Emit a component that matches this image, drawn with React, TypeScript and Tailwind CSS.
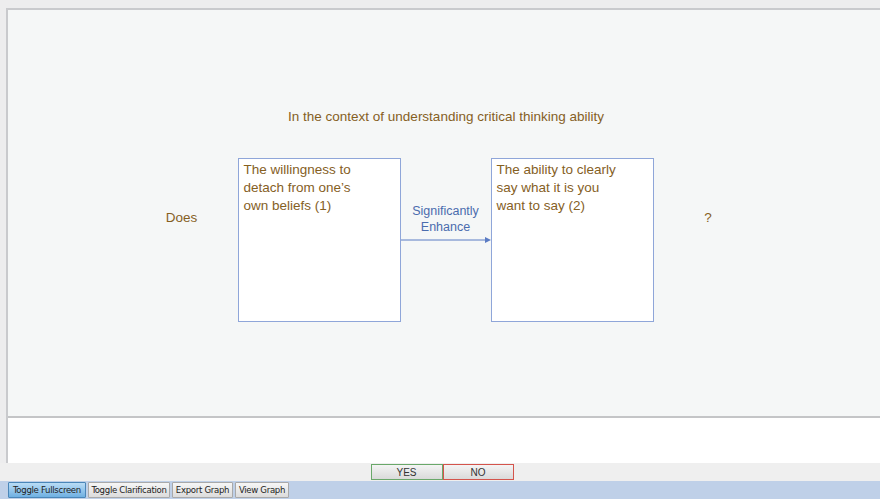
import React from "react";

const brown = "text-[#85601f]";

function Box({ children }: { children: React.ReactNode }) {
  return (
    <div className="w-[163px] h-[164px] shrink-0 bg-white border border-[#8fa6d9] px-[5px] pt-[2px] text-[13.5px] leading-[18px] text-[#85601f]">
      {children}
    </div>
  );
}

function ToolBtn({ label, active, w }: { label: string; active?: boolean; w: string }) {
  return (
    <div
      className={
        "h-[16px] flex items-center justify-center border rounded-[1px] text-[9.5px] tracking-[-0.3px] text-[#222] " +
        w +
        (active
          ? " border-[#4a86b8] bg-gradient-to-b from-[#b9dcf5] to-[#6fb0e2]"
          : " border-[#a9a9a9] bg-gradient-to-b from-[#f6f6f6] to-[#dcdcdc]")
      }
      style={{ fontFamily: '"DejaVu Sans Condensed", "DejaVu Sans", sans-serif' }}
    >
      {label}
    </div>
  );
}

export default function App() {
  return (
    <div
      className="w-[880px] h-[499px] bg-[#ededee] flex flex-col overflow-hidden"
      style={{ fontFamily: '"Liberation Sans", Arial, sans-serif' }}
    >
      <div className="h-[463px] pl-[6px] pt-[8px] flex flex-col">
        <div className="flex-1 flex flex-col border-l-2 border-t-2 border-[#c9cacd]">
          <div className="h-[406px] bg-[#f5f7f7] flex flex-col items-center">
            <div className={"mt-[99px] ml-[4px] h-[16px] text-[13.5px] leading-[16px] " + brown}>
              In the context of understanding critical thinking ability
            </div>
            <div className="mt-[33px] flex flex-row">
              <div className={"w-[112px] mt-[52px] text-center text-[13.5px] leading-[16px] " + brown}>Does</div>
              <Box>
                The willingness to
                <br />
                detach from one’s
                <br />
                own beliefs (1)
              </Box>
              <div className="w-[90px] flex flex-col items-center">
                <div className="mt-[45px] text-center text-[12.5px] leading-[16px] text-[#4b6cae]">
                  Significantly
                  <br />
                  Enhance
                </div>
                <svg width="90" height="8" viewBox="0 0 90 8" className="mt-[1px]">
                  <line x1="0" y1="4" x2="87" y2="4" stroke="#5b7cc4" strokeWidth="1" />
                  <path d="M84 1 L90 4 L84 7 Z" fill="#5b7cc4" />
                </svg>
              </div>
              <Box>
                The ability to clearly
                <br />
                say what it is you
                <br />
                want to say (2)
              </Box>
              <div className={"w-[109px] mt-[52px] text-center text-[13.5px] leading-[16px] " + brown}>?</div>
            </div>
          </div>
          <div className="h-[2px] bg-[#c4c5c7]" />
          <div className="flex-1 bg-white" />
        </div>
      </div>
      <div className="h-[18px] bg-[#efefef] flex justify-center pl-[4px] pt-[1px]">
        <div className="w-[72px] h-[16px] border border-[#6aa86a] bg-gradient-to-b from-[#f4f4f4] to-[#dadada] flex items-center justify-center text-[10px] text-[#333]">
          YES
        </div>
        <div className="w-[71px] h-[16px] border border-[#d4544c] bg-gradient-to-b from-[#f4f4f4] to-[#dadada] flex items-center justify-center text-[10px] text-[#333]">
          NO
        </div>
      </div>
      <div className="h-[18px] bg-[#bfd0e8] flex items-center gap-[2px] px-[8px]">
        <ToolBtn label="Toggle Fullscreen" active w="w-[78px]" />
        <ToolBtn label="Toggle Clarification" w="w-[82px]" />
        <ToolBtn label="Export Graph" w="w-[61px]" />
        <ToolBtn label="View Graph" w="w-[54px]" />
      </div>
    </div>
  );
}
